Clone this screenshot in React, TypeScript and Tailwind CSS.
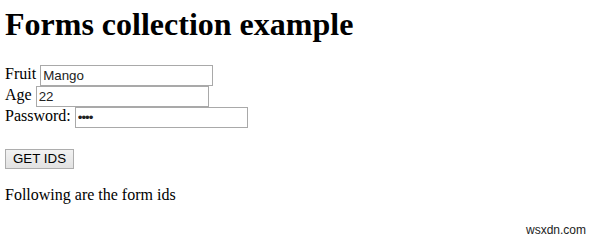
export default function App() {
  const serif = { fontFamily: '"Liberation Serif", "Times New Roman", serif' };
  const sans = { fontFamily: '"Liberation Sans", Arial, sans-serif' };
  const inputCls =
    "w-[173px] h-[21px] border border-[#a9a9a9] bg-white px-[2px] text-[13.33px] text-[#222] outline-none box-border";
  return (
    <div className="relative h-[235px] w-[599px] bg-white pl-[5px] text-black" style={serif}>
      <h1 className="mt-[6px] text-[32px] leading-[36px] font-bold">Forms collection example</h1>
      <form className="mt-[23px] text-[16px]">
        <div className="flex h-[21px] items-center">
          <span className="mr-[4px] self-start leading-[18px]">Fruit</span>
          <input className={inputCls} style={sans} defaultValue="Mango" />
        </div>
        <div className="flex h-[21px] items-center">
          <span className="mr-[4px] self-start leading-[18px]">Age</span>
          <input className={inputCls} style={sans} defaultValue="22" />
        </div>
        <div className="flex h-[21px] items-center">
          <span className="mr-[4px] self-start leading-[18px]">Password:</span>
          <input
            className={inputCls + " text-[8px] tracking-[-1px]"}
            style={sans}
            defaultValue="••••"
            readOnly
          />
        </div>
      </form>
      <div className="mt-[18px]">
        <button
          type="button"
          className="h-[20px] w-[69px] border border-[#adadad] bg-gradient-to-b from-[#f2f2f2] to-[#e2e2e2] text-[13.33px] leading-[18px] text-black"
          style={sans}
        >
          GET IDS
        </button>
      </div>
      <p className="mt-[15px] text-[16px] leading-[20px]">Following are the form ids</p>
      <div className="absolute left-[526px] top-[217px] text-[12px] leading-[14px] text-[#222]" style={sans}>
        wsxdn.com
      </div>
    </div>
  );
}
